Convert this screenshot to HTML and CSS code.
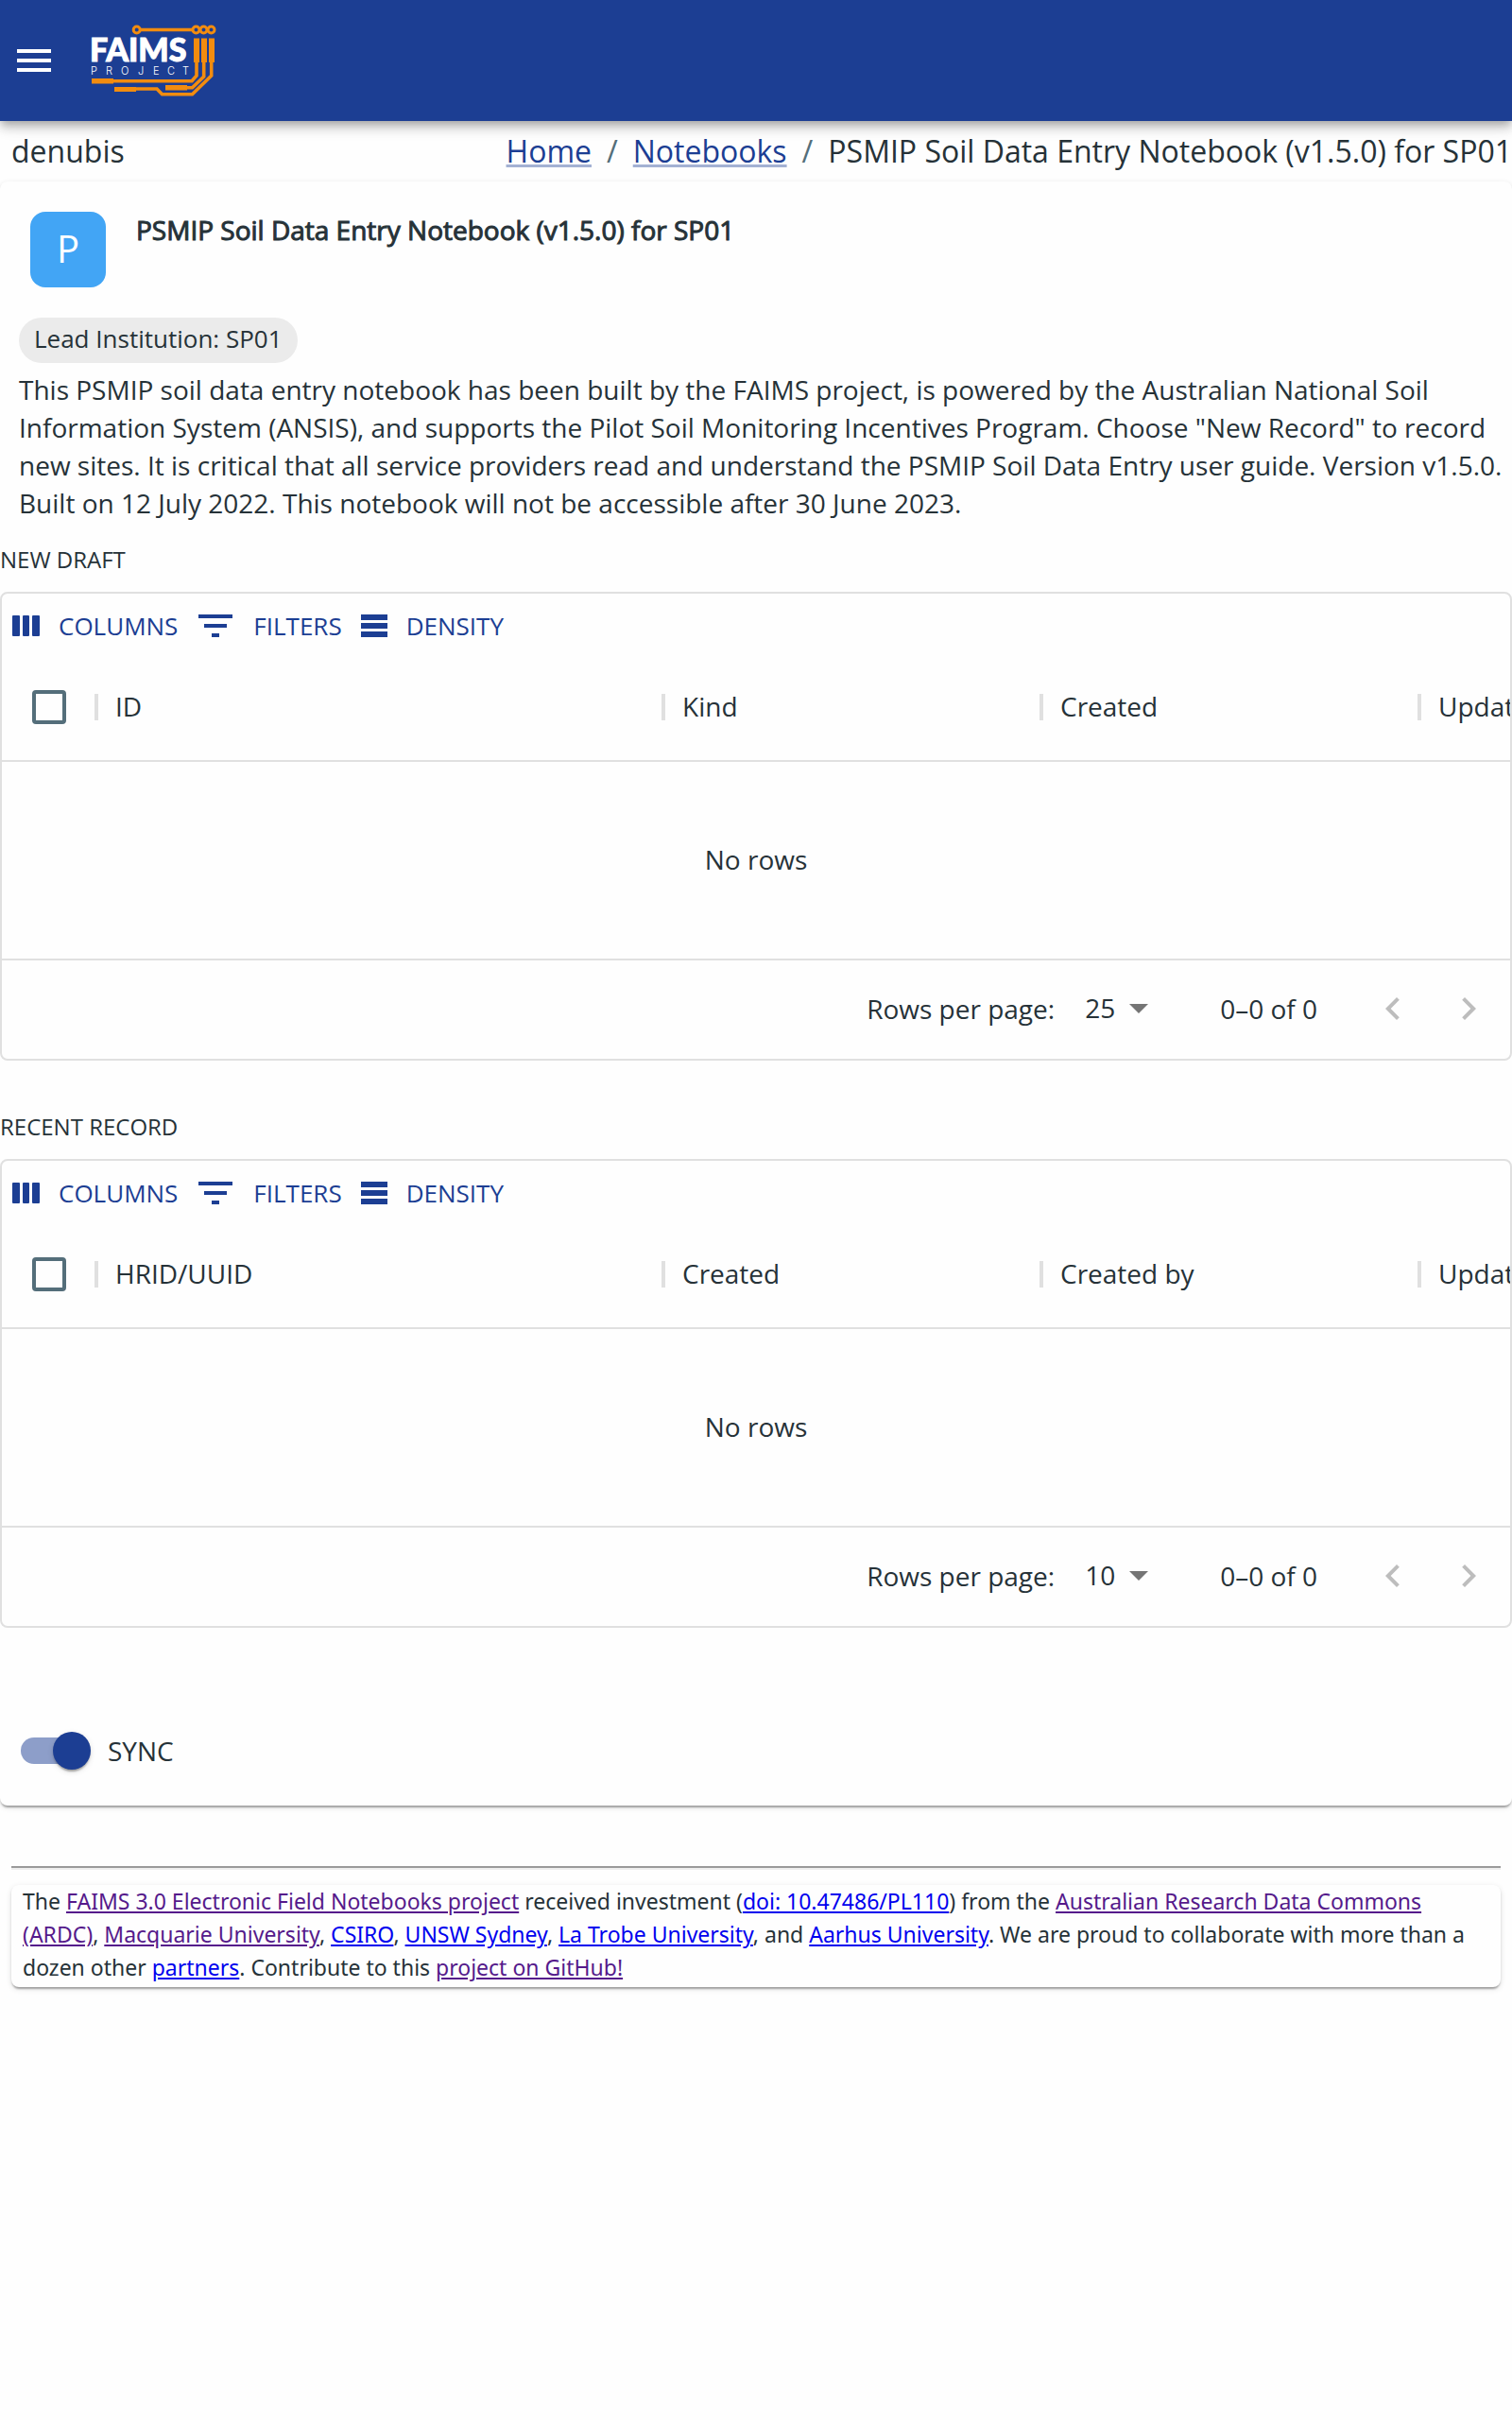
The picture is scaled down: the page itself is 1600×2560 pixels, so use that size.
FILE: index.html
```html
<!DOCTYPE html>
<html lang="en">
<head>
<meta charset="utf-8">
<meta name="viewport" content="width=device-width, initial-scale=1">
<title>PSMIP Soil Data Entry Notebook (v1.5.0) for SP01</title>
<link rel="stylesheet" href="styles.css">
</head>
<body>
<header class="appbar">
  <button class="menu-button" type="button" aria-label="Open menu">
    <svg width="48" height="48" viewBox="0 0 24 24" fill="currentColor"><path d="M3 18h18v-2H3v2zm0-5h18v-2H3v2zm0-7v2h18V6H3z"/></svg>
  </button>
  <a class="logo" href="#" aria-label="FAIMS Project">
    <svg width="136" height="80" viewBox="0 0 136 80">
      <g fill="none" stroke="#f28c0f" stroke-width="3.6">
        <circle cx="48.7" cy="7.5" r="3.5" stroke-width="3"/>
        <path d="M52 7.5H108"/>
        <circle cx="111.5" cy="7.5" r="3.5" stroke-width="3"/>
        <circle cx="119.5" cy="7.5" r="3.5" stroke-width="3"/>
        <circle cx="127.5" cy="7.5" r="3.5" stroke-width="3"/>
        <path d="M112 40V56L107 61.7H22"/>
        <path d="M119.7 40V57L107.500 68.700H100"/>
        <path d="M127.700 40V56L107.500 75.700H75.500L70 70H46"/>
      </g>
      <g fill="#f28c0f">
        <path d="M109 16.500h6V42h-6zM117 16.500h6V42h-6zM125 16.500h6V42h-6zM1 59h23v5.500H1zM25 68h23v5H25zM79 66h23v5.500H79z"/>
      </g>
      <text class="logo-name" x="-1" y="41">FAIMS</text>
      <text class="logo-sub" x="0 16 32 50 66 81 97" y="55">PROJECT</text>
    </svg>
  </a>
</header>

<nav class="crumb-bar" aria-label="Breadcrumb">
  <span>denubis</span>
  <ol class="crumbs">
    <li><a href="#">Home</a></li>
    <li class="slash" aria-hidden="true">/</li>
    <li><a href="#">Notebooks</a></li>
    <li class="slash" aria-hidden="true">/</li>
    <li>PSMIP Soil Data Entry Notebook (v1.5.0) for SP01</li>
  </ol>
</nav>

<main class="card">
  <div class="card-head">
    <div class="avatar">P</div>
    <h1>PSMIP Soil Data Entry Notebook (v1.5.0) for SP01</h1>
  </div>
  <div class="card-body">
    <span class="chip">Lead Institution: SP01</span>
    <p>This PSMIP soil data entry notebook has been built by the FAIMS project, is powered by the Australian National Soil Information System (ANSIS), and supports the Pilot Soil Monitoring Incentives Program. Choose "New Record" to record new sites. It is critical that all service providers read and understand the PSMIP Soil Data Entry user guide. Version v1.5.0. Built on 12 July 2022. This notebook will not be accessible after 30 June 2023.</p>
  </div>

  <section class="records">
    <h2>NEW DRAFT</h2>
    <div class="grid">
      <div class="toolbar">
        <button type="button"><svg width="36" height="36" viewBox="0 0 36 36"><path d="M4 7h6a1 1 0 0 1 1 1v20a1 1 0 0 1-1 1H4a1 1 0 0 1-1-1V8a1 1 0 0 1 1-1zM15 7h5a1 1 0 0 1 1 1v20a1 1 0 0 1-1 1h-5a1 1 0 0 1-1-1V8a1 1 0 0 1 1-1zM25 7h6a1 1 0 0 1 1 1v20a1 1 0 0 1-1 1h-6a1 1 0 0 1-1-1V8a1 1 0 0 1 1-1z"/></svg>COLUMNS</button>
        <button type="button"><svg width="48" height="48" viewBox="0 0 24 24"><path d="M10 18h4v-2h-4v2zM3 6v2h18V6H3zm3 7h12v-2H6v2z"/></svg>FILTERS</button>
        <button type="button"><svg width="36" height="36" viewBox="0 0 36 36"><path d="M4 6h28v6H4zM4 15h28v6H4zM4 24h28v6H4z"/></svg>DENSITY</button>
      </div>
      <table>
        <colgroup><col class="c-check"><col class="c-wide"><col class="c-mid"><col class="c-mid"><col class="c-mid"></colgroup>
        <thead><tr>
          <th><input type="checkbox" aria-label="Select all drafts"></th>
          <th>ID</th><th>Kind</th><th>Created</th><th>Updated</th>
        </tr></thead>
      </table>
      <div class="empty">No rows</div>
      <div class="pager">
        <label for="rows-draft">Rows per page:</label>
        <span class="select"><select id="rows-draft"><option>25</option></select><svg width="20" height="10" viewBox="0 0 20 10"><path d="M0 0h20L10 10z"/></svg></span>
        <span class="range">0–0 of 0</span>
        <button type="button" disabled aria-label="Previous page"><svg width="48" height="48" viewBox="0 0 24 24"><path d="M15.410 16.590 10.830 12l4.580-4.590L14 6l-6 6 6 6z"/></svg></button>
        <button type="button" disabled aria-label="Next page"><svg width="48" height="48" viewBox="0 0 24 24"><path d="M8.590 16.590 13.170 12 8.590 7.410 10 6l6 6-6 6z"/></svg></button>
      </div>
    </div>
  </section>

  <section class="records">
    <h2>RECENT RECORD</h2>
    <div class="grid">
      <div class="toolbar">
        <button type="button"><svg width="36" height="36" viewBox="0 0 36 36"><path d="M4 7h6a1 1 0 0 1 1 1v20a1 1 0 0 1-1 1H4a1 1 0 0 1-1-1V8a1 1 0 0 1 1-1zM15 7h5a1 1 0 0 1 1 1v20a1 1 0 0 1-1 1h-5a1 1 0 0 1-1-1V8a1 1 0 0 1 1-1zM25 7h6a1 1 0 0 1 1 1v20a1 1 0 0 1-1 1h-6a1 1 0 0 1-1-1V8a1 1 0 0 1 1-1z"/></svg>COLUMNS</button>
        <button type="button"><svg width="48" height="48" viewBox="0 0 24 24"><path d="M10 18h4v-2h-4v2zM3 6v2h18V6H3zm3 7h12v-2H6v2z"/></svg>FILTERS</button>
        <button type="button"><svg width="36" height="36" viewBox="0 0 36 36"><path d="M4 6h28v6H4zM4 15h28v6H4zM4 24h28v6H4z"/></svg>DENSITY</button>
      </div>
      <table>
        <colgroup><col class="c-check"><col class="c-wide"><col class="c-mid"><col class="c-mid"><col class="c-mid"></colgroup>
        <thead><tr>
          <th><input type="checkbox" aria-label="Select all records"></th>
          <th>HRID/UUID</th><th>Created</th><th>Created by</th><th>Updated</th>
        </tr></thead>
      </table>
      <div class="empty">No rows</div>
      <div class="pager">
        <label for="rows-record">Rows per page:</label>
        <span class="select"><select id="rows-record"><option>10</option></select><svg width="20" height="10" viewBox="0 0 20 10"><path d="M0 0h20L10 10z"/></svg></span>
        <span class="range">0–0 of 0</span>
        <button type="button" disabled aria-label="Previous page"><svg width="48" height="48" viewBox="0 0 24 24"><path d="M15.410 16.590 10.830 12l4.580-4.590L14 6l-6 6 6 6z"/></svg></button>
        <button type="button" disabled aria-label="Next page"><svg width="48" height="48" viewBox="0 0 24 24"><path d="M8.590 16.590 13.170 12 8.590 7.410 10 6l6 6-6 6z"/></svg></button>
      </div>
    </div>
  </section>

  <label class="sync"><input type="checkbox" role="switch" checked>SYNC</label>
</main>

<footer class="footer">
  <hr>
  <p>The <a class="visited" href="#">FAIMS 3.0 Electronic Field Notebooks project</a> received investment (<a href="#">doi: 10.47486/PL110</a>) from the <a class="visited" href="#">Australian Research Data Commons (ARDC)</a>, <a class="visited" href="#">Macquarie University</a>, <a href="#">CSIRO</a>, <a href="#">UNSW Sydney</a>, <a href="#">La Trobe University</a>, and <a href="#">Aarhus University</a>. We are proud to collaborate with more than a dozen other <a href="#">partners</a>. Contribute to this <a class="visited" href="#">project on GitHub!</a></p>
</footer>
</body>
</html>
```
FILE: styles.css
```css
*, *::before, *::after { box-sizing: border-box; }

:root {
  --blue: #1c3e93;
  --ink: #263238;
  --line: #e0e0e0;
  --card-shadow: 0 4px 2px -2px rgba(0, 0, 0, .2), 0 2px 2px rgba(0, 0, 0, .14), 0 2px 6px rgba(0, 0, 0, .12);
}

body {
  margin: 0;
  min-height: 100vh;
  background: #fefefe;
  color: var(--ink);
  font: 28px/40px "Open Sans", "Noto Sans", sans-serif;
}

button { border: 0; background: none; font: inherit; color: inherit; padding: 0; }
svg { display: block; }

.appbar {
  position: relative;
  display: flex;
  align-items: center;
  gap: 36px;
  height: 128px;
  padding: 0 12px;
  background: var(--blue);
  color: #fff;
  box-shadow: 0 4px 8px -2px rgba(0, 0, 0, .2), 0 8px 10px rgba(0, 0, 0, .14), 0 2px 20px rgba(0, 0, 0, .12);
}
.logo-name { font: 900 34px "Lato", sans-serif; fill: #fff; stroke: #fff; stroke-width: 1px; }
.logo-sub { font: 300 11px "Inter", sans-serif; fill: #fff; }

.crumb-bar {
  display: flex;
  justify-content: space-between;
  align-items: center;
  height: 64px;
  padding: 0 0 0 12px;
  font-size: 32px;
  line-height: 48px;
}
.crumbs { display: flex; gap: 16px; margin: 0; padding: 0; list-style: none; white-space: nowrap; }
.crumbs a {
  color: var(--blue);
  text-decoration-color: rgba(28, 62, 147, .4);
}
.slash { color: #546e7a; }

.card {
  border-radius: 8px;
  background: #fefefe;
  box-shadow: var(--card-shadow);
}
.card-head { display: flex; gap: 32px; padding: 32px 32px 16px; }
.avatar {
  display: grid;
  place-items: center;
  width: 80px;
  height: 80px;
  padding-bottom: 2px;
  border-radius: 16px;
  background: #42a5f5;
  color: #fff;
  font-size: 40px;
}
h1 { margin: 0; font-size: 28px; font-weight: 400; line-height: 38px; -webkit-text-stroke: 1px currentColor; }
.card-body { padding: 16px 10px 0 20px; }
.chip {
  display: block;
  width: fit-content;
  padding: 0 16px 4px;
  border-radius: 24px;
  background: #ebebeb;
  font-size: 26px;
  line-height: 44px;
}
.card-body p { margin: 8px 0 0; }

.records { padding-bottom: 40px; }
h2 { margin: 0; padding: 20px 0 14px; font-size: 24px; font-weight: 400; line-height: 40px; }
.records .grid { border: 2px solid var(--line); border-radius: 8px; overflow: hidden; }
.records + .records h2 { padding-top: 10px; }

.toolbar { display: flex; gap: 16px; height: 64px; align-items: center; padding: 4px 8px 0; }
.toolbar button {
  display: flex;
  align-items: center;
  gap: 16px;
  color: var(--blue);
  font-size: 26px;
}
.toolbar svg { fill: currentColor; }

table { width: 1898px; table-layout: fixed; border-collapse: separate; border-spacing: 0; }
.c-check { width: 98px; }
.c-wide { width: 600px; }
.c-mid { width: 400px; }
th {
  height: 114px;
  padding: 0 22px 2px;
  border-bottom: 2px solid var(--line);
  background: linear-gradient(var(--line), var(--line)) 0 center / 4px 28px no-repeat;
  font-weight: 400;
  text-align: left;
}
th:first-child { background: none; padding: 0 32px; }
th input {
  appearance: none;
  display: block;
  width: 36px;
  height: 36px;
  margin: 0;
  border: 4px solid #546e7a;
  border-radius: 4px;
}
.empty { display: grid; place-items: center; height: 208px; padding-bottom: 2px; }

.pager {
  display: flex;
  align-items: center;
  justify-content: flex-end;
  height: 106px;
  padding: 0 20px 2px 0;
  border-top: 2px solid var(--line);
}
.pager label { margin-right: 32px; }
.select { display: flex; align-items: center; gap: 14px; margin-right: 76px; }
.select svg { fill: #757575; }
.pager select {
  appearance: none;
  border: 0;
  padding: 0 0 2px;
  background: none;
  color: inherit;
  font: inherit;
}
.range { margin-right: 56px; }
.pager button { color: #bdbdbd; }
.pager button + button { margin-left: 32px; }
.pager button svg { fill: currentColor; }

.sync { display: flex; align-items: center; gap: 18px; width: fit-content; padding: 70px 22px 38px; }
.sync input {
  appearance: none;
  position: relative;
  width: 74px;
  height: 40px;
  margin: 0;
}
.sync input::before {
  content: "";
  position: absolute;
  inset: 6px 6px 6px 0;
  border-radius: 14px;
  background: #8d9ec9;
}
.sync input::after {
  content: "";
  position: absolute;
  top: 0;
  right: 0;
  width: 40px;
  height: 40px;
  border-radius: 50%;
  background: var(--blue);
  box-shadow: var(--card-shadow);
}

.footer { padding: 64px 12px 32px; font: 23px/35px "Noto Sans", sans-serif; }
.footer hr { height: 4px; margin: 0 0 16px; border: 0; border-top: 2px solid #9a9a9a; border-bottom: 2px solid #eee; }
.footer p { margin: 0; padding: 0 12px 3px; border-radius: 8px; background: #fefefe; box-shadow: var(--card-shadow); }
.footer a { color: #00e; }
.footer a.visited { color: #551a8b; }
```
